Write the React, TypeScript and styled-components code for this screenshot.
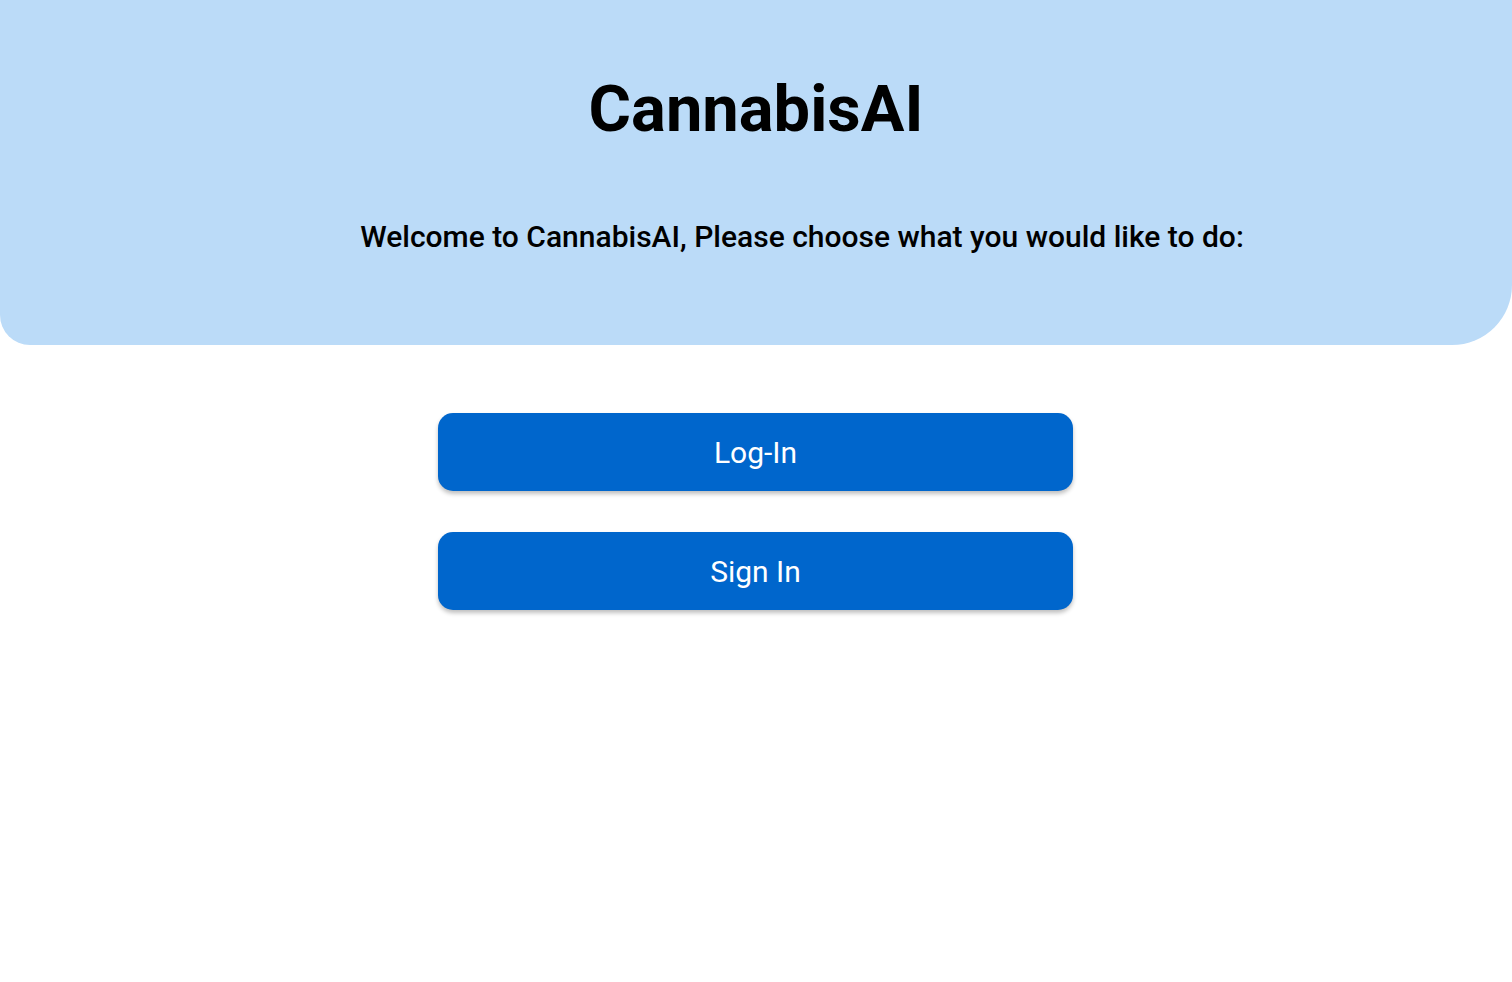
import * as React from 'react';
import styled, { createGlobalStyle } from 'styled-components';

const GlobalStyle = createGlobalStyle`
    html, body {
        margin: 0;
        padding: 0;
        background: #ffffff;
        font-family: Roboto, "Noto Sans", Arial, sans-serif;
    }
`;

const Page = styled.div`
    min-height: 100vh;
    display: flex;
    flex-direction: column;
`;

const Header = styled.header`
    height: 345px;
    box-sizing: border-box;
    padding-top: 72px;
    background-color: #bbdbf8;
    border-bottom-left-radius: 30px;
    border-bottom-right-radius: 60px;
    display: flex;
    flex-direction: column;
    align-items: center;
`;

const Title = styled.h1`
    margin: 0;
    font-size: 65px;
    font-weight: 700;
    color: #000000;
    line-height: 75px;
`;

const Subtitle = styled.p`
    margin: 73px 0 0;
    padding-left: 92px;
    font-size: 30px;
    font-weight: 500;
    color: #000000;
    line-height: 33px;
`;

const Actions = styled.div`
    margin-top: 68px;
    display: flex;
    flex-direction: column;
    align-items: center;
    gap: 41px;
`;

const ActionButton = styled.button`
    width: 635px;
    height: 78px;
    margin-right: 1px;
    border: none;
    border-radius: 15px;
    background-color: #0066cc;
    color: #ffffff;
    font-family: inherit;
    font-size: 30px;
    font-weight: 400;
    box-shadow: 0 3px 4px rgba(0, 0, 0, 0.25);
    cursor: pointer;
`;

export default function App() {
    return (
        <Page>
            <GlobalStyle />
            <Header>
                <Title>CannabisAI</Title>
                <Subtitle>Welcome to CannabisAI, Please choose what you would like to do:</Subtitle>
            </Header>
            <Actions>
                <ActionButton>Log-In</ActionButton>
                <ActionButton>Sign In</ActionButton>
            </Actions>
        </Page>
    );
}
